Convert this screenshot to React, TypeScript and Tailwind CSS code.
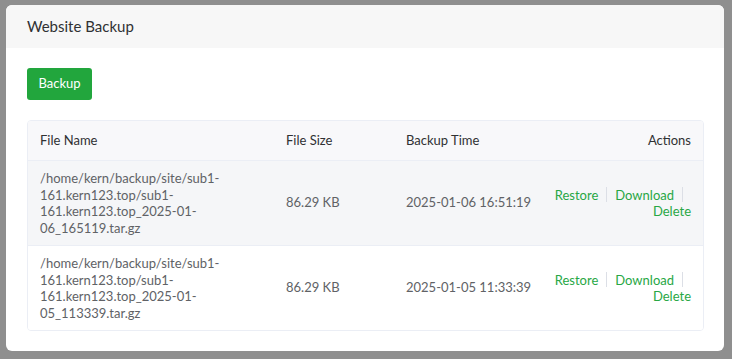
import React from "react";

const rows = [
  {
    name: "/home/kern/backup/site/sub1-161.kern123.top/sub1-161.kern123.top_2025-01-06_165119.tar.gz",
    size: "86.29 KB",
    time: "2025-01-06 16:51:19",
    bg: "bg-[#f5f6f8]",
  },
  {
    name: "/home/kern/backup/site/sub1-161.kern123.top/sub1-161.kern123.top_2025-01-05_113339.tar.gz",
    size: "86.29 KB",
    time: "2025-01-05 11:33:39",
    bg: "bg-white",
  },
];

function Actions() {
  return (
    <div className="text-right leading-[16.5px]">
      <span className="inline-flex items-center">
        <a className="text-[#28a745] cursor-pointer">Restore</a>
        <span className="inline-block w-px h-[15px] bg-[#dcdfe6] mx-[8px]" />
      </span>
      <span className="inline-flex items-center">
        <a className="text-[#28a745] cursor-pointer">Download</a>
        <span className="inline-block w-px h-[15px] bg-[#dcdfe6] mx-[8px]" />
      </span>
      <span className="inline-flex items-center">
        <a className="text-[#28a745] cursor-pointer">Delete</a>
      </span>
    </div>
  );
}

export default function App() {
  return (
    <div
      className="w-[732px] h-[359px] bg-[#8f8f8f] pt-[5px] pl-[6px] pr-[8px] pb-[8px]"
      style={{ fontFamily: 'Lato, "Open Sans", sans-serif' }}
    >
      <div className="h-full bg-white rounded-[6px] overflow-hidden flex flex-col">
        <div className="h-[43px] shrink-0 bg-[#f7f7f7] pl-[21px] flex items-center text-[15px] text-[#303133]">
          Website Backup
        </div>
        <div className="pl-[21px] pr-[20px] pt-[20px]">
          <button className="h-[32px] w-[65px] bg-[#22a63d] rounded-[3px] text-white text-[13px] flex items-center justify-center">
            Backup
          </button>
          <div className="mt-[20px] border border-[#ebeef5] rounded-[4px] overflow-hidden text-[13px]">
            <div className="grid grid-cols-[246px_120px_146px_1fr] h-[40px] items-center bg-[#f8f8fa] border-b border-[#ebeef5] text-[#303133]">
              <div className="px-[12px]">File Name</div>
              <div className="px-[12px]">File Size</div>
              <div className="px-[12px]">Backup Time</div>
              <div className="px-[12px] text-right">Actions</div>
            </div>
            {rows.map((r, i) => (
              <div
                key={i}
                className={`grid grid-cols-[246px_120px_146px_1fr] items-center py-[9px] text-[#606266] ${r.bg} ${
                  i === 0 ? "border-b border-[#ebeef5]" : ""
                }`}
              >
                <div className="px-[12px] leading-[16.5px]">{r.name}</div>
                <div className="px-[12px] whitespace-nowrap">{r.size}</div>
                <div className="pl-[12px] whitespace-nowrap">{r.time}</div>
                <div className="px-[12px]">
                  <Actions />
                </div>
              </div>
            ))}
          </div>
        </div>
      </div>
    </div>
  );
}
